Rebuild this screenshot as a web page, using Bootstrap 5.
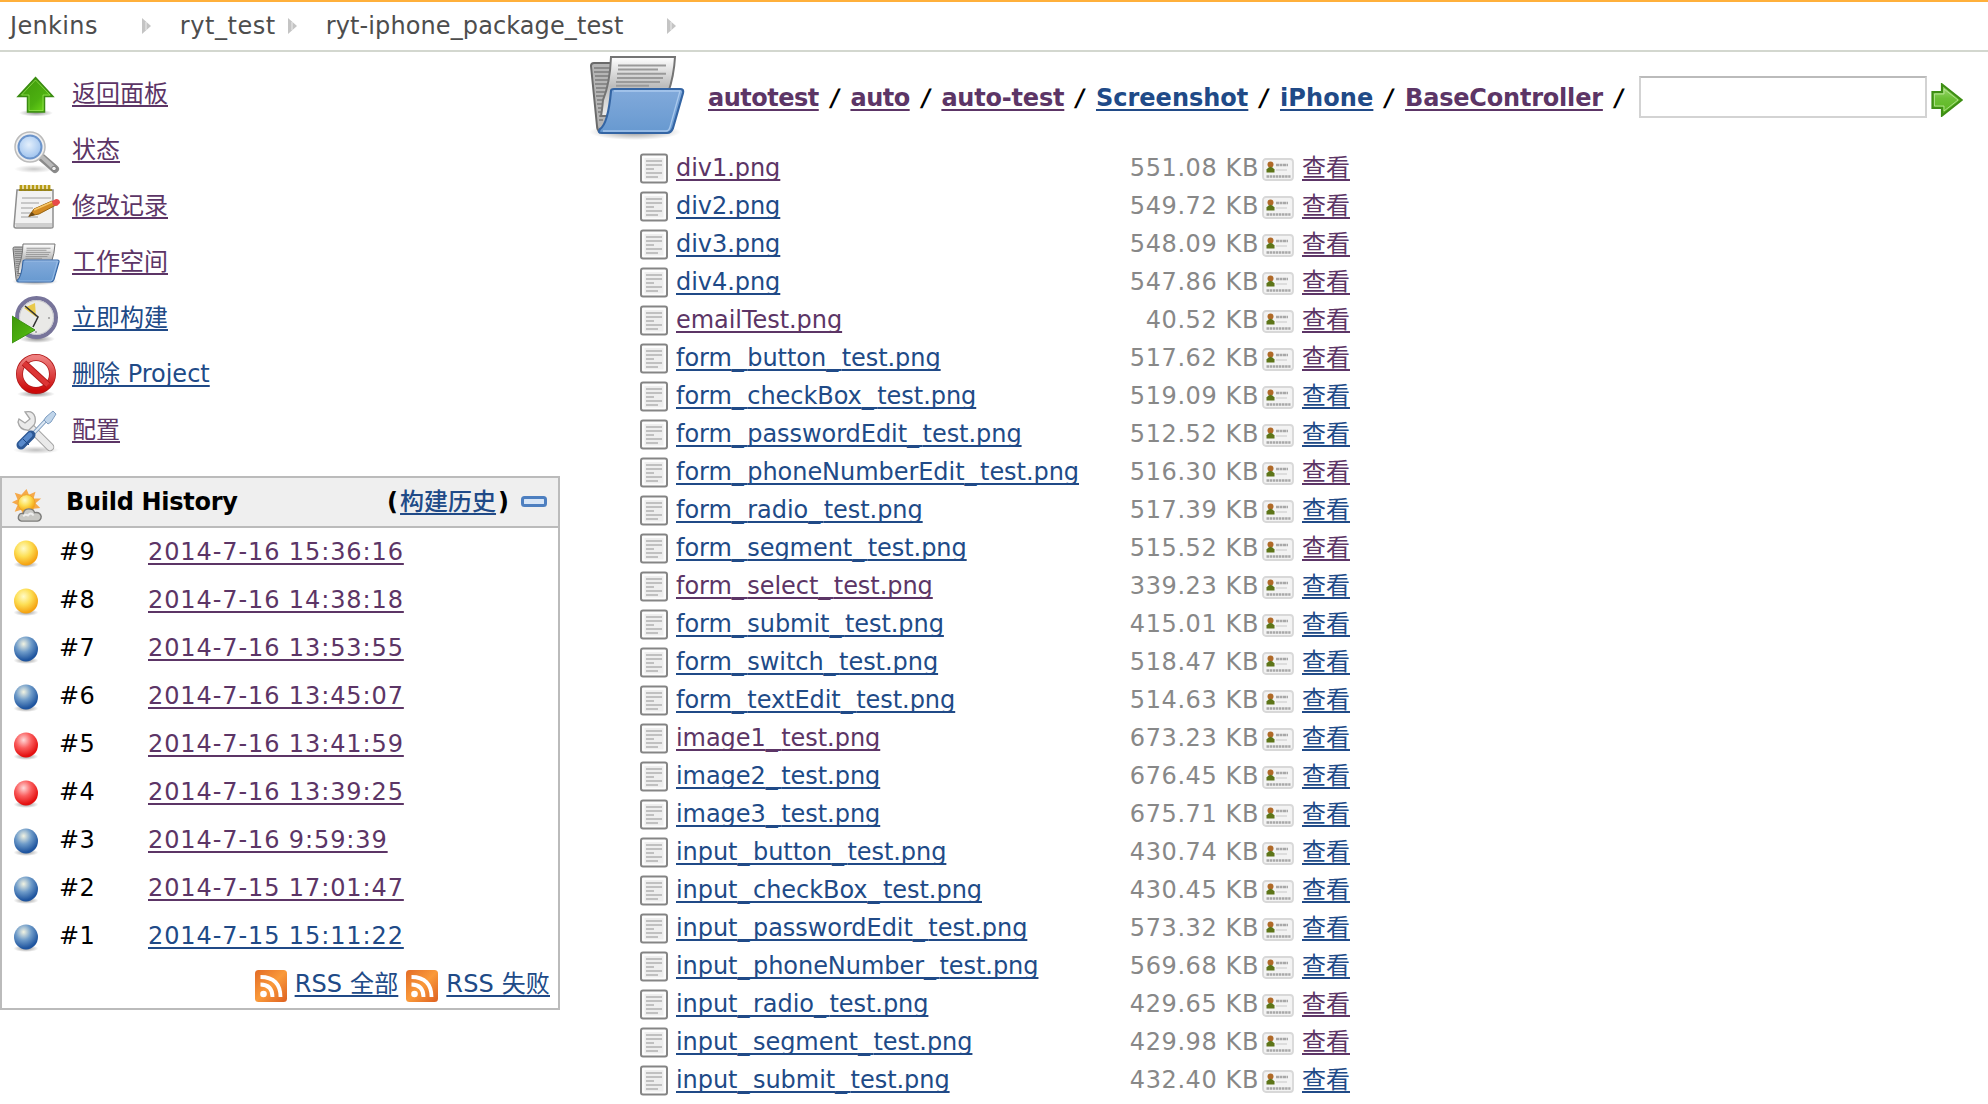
<!DOCTYPE html>
<html lang="zh-CN">
<head>
<meta charset="utf-8">
<meta name="viewport" content="width=device-width, initial-scale=1">
<title>ryt-iphone_package_test [Jenkins]</title>
<link href="https://cdn.jsdelivr.net/npm/bootstrap@5.3.0/dist/css/bootstrap.min.css" rel="stylesheet">
<style>
body{font-family:"DejaVu Sans","Noto Sans CJK SC",sans-serif;font-size:24px;line-height:38px;color:#000;background:#fff;overflow:hidden;height:1104px}
a{color:#204a87;text-decoration:underline;text-decoration-thickness:2px;text-underline-offset:3px;text-decoration-skip-ink:none;white-space:nowrap}
a.seen{color:#5c3566}
svg{display:block;flex:none}
.crumbs{height:52px;border-top:2px solid #ffb03b;border-bottom:2px solid #d3d7cf;padding-left:10px}
.crumbs a{color:#4d4d4d;text-decoration:none;margin-right:44px;letter-spacing:.1px}
.crumbs svg{margin-right:28px}
.crumbs .home{letter-spacing:.35px}
.crumbs .near{margin-right:12px;letter-spacing:.55px}
.side{width:561px;padding-top:15px}
.task{height:56px;padding-left:12px}
.task svg{margin:2px 12px 0 0}
.task a{margin-top:-2px}
.history{width:560px;height:534px;margin-top:17px;border:2px solid #bbb}
.history-head{height:50px;background:#efefef;border-bottom:2px solid #bbb;font-weight:bold;padding:0 11px 0 9px}
.history-head .title{margin-left:23px;letter-spacing:-.3px}
.history-head a{font-weight:500;margin:0 2px 0 2px}
.history-head .fold{margin-left:12px}
.build{height:48px;padding-left:11px}
.build svg{margin-top:3px}
.build .num{width:89px;margin-left:20px;letter-spacing:.5px}
.build a{letter-spacing:.9px}
.rss{height:48px;padding-right:8px}
.rss svg{margin:3px 8px 0}
.rss a{letter-spacing:.15px}
.main{padding-left:28px}
.path{height:97px;font-weight:bold}
.path .dir{margin:-3px 23px 0 0}
.path a,.path b{margin-top:27px}
.path b{width:31.7px;text-align:center;transform:skewX(-9deg)}
.tight{letter-spacing:-.5px}
.snug{letter-spacing:-.2px}
.airy{letter-spacing:.1px}
.goto{width:288px;height:42px;border:2px solid #d3d3d3;border-top-color:#bbb;border-radius:0;padding:0;margin:24px 4px 0}
.go{margin-top:31px}
.file{height:38px;padding-left:51px}
.file .doc{margin-top:2px}
.file .fname{margin-left:8px;width:348px;letter-spacing:-.05px}
.file .fname i{font-style:normal;letter-spacing:3.5px}
.file .fsize{width:235px;text-align:right;color:#888;letter-spacing:.6px;margin-right:3px}
.file .print{margin-top:3px}
.file .view{margin-left:8px}
</style>
</head>
<body>
<svg width="0" height="0" class="position-absolute">
<defs>
<linearGradient id="gGreen" x1="0" y1="0" x2="1" y2="1"><stop offset="0" stop-color="#3f960b"/><stop offset=".6" stop-color="#4cb010"/><stop offset="1" stop-color="#7be81c"/></linearGradient>
<linearGradient id="gGo" x1="0" y1="0" x2="0" y2="1"><stop offset="0" stop-color="#a6dc7c"/><stop offset=".45" stop-color="#6cc036"/><stop offset="1" stop-color="#58b41c"/></linearGradient>
<linearGradient id="gBlue" x1="0" y1="0" x2="0" y2="1"><stop offset="0" stop-color="#82aadb"/><stop offset="1" stop-color="#6799d0"/></linearGradient>
<linearGradient id="gPaper" x1="0" y1="0" x2="0" y2="1"><stop offset="0" stop-color="#fff"/><stop offset=".5" stop-color="#bcbcbc"/><stop offset="1" stop-color="#eee"/></linearGradient>
<linearGradient id="gRed" x1="0" y1="0" x2="0" y2="1"><stop offset="0" stop-color="#ee7f7f"/><stop offset="1" stop-color="#cc0a0a"/></linearGradient>
<linearGradient id="gRss" x1="0" y1="0" x2="1" y2="1"><stop offset="0" stop-color="#e26b26"/><stop offset=".5" stop-color="#fa9a3a"/><stop offset="1" stop-color="#dd6020"/></linearGradient>
<radialGradient id="gShade"><stop offset="0" stop-color="#000" stop-opacity=".42"/><stop offset="1" stop-color="#000" stop-opacity="0"/></radialGradient>
<radialGradient id="bYellow" cx=".4" cy=".32" r=".65"><stop offset="0" stop-color="#fffbc8"/><stop offset=".5" stop-color="#fddf55"/><stop offset="1" stop-color="#f5a312"/></radialGradient>
<radialGradient id="bBlue" cx=".4" cy=".3" r=".65"><stop offset="0" stop-color="#f2f3e2"/><stop offset=".5" stop-color="#6e9bc9"/><stop offset="1" stop-color="#1f559f"/></radialGradient>
<radialGradient id="bRed" cx=".4" cy=".3" r=".65"><stop offset="0" stop-color="#ffd9d9"/><stop offset=".5" stop-color="#fa5d5d"/><stop offset="1" stop-color="#e41010"/></radialGradient>
<radialGradient id="gLens" cx=".45" cy=".4" r=".6"><stop offset="0" stop-color="#e3effc"/><stop offset="1" stop-color="#9fc3ee"/></radialGradient>
<symbol id="i-folder" viewBox="0 0 96 96">
<ellipse cx="46" cy="83" rx="46" ry="8" fill="url(#gShade)"/>
<path d="M2 17q0-3 3-3h20v45L16 82l-5 1q-3-2-3-6z" fill="#b5b5b5" stroke="#6a6a6a" stroke-width="2"/>
<path d="M5 19h17M5 23h17M6 27h15M6 31h15M6 35h14M7 39h13M7 43h12M7 47h12M8 51h10M8 55h9M9 59h7M9 63h6M10 67h4M10 71h4" stroke="#7c7c7c" stroke-width="1.500"/>
<path d="M22 8h64q-1 19-7 36H24Q20 64 18 67h-6q1-5 2-16Q21 34 22 8z" fill="url(#gPaper)" stroke="#747474" stroke-width="2"/>
<path d="M29 16.500h48M29 20.500h40M28 24.700h49M28 28.900h46M27 33h44M27 36.700h33" stroke="#9a9a9a" stroke-width="2"/>
<path d="M22 42q0-2 3-2h66q4 0 3 4l-10 35q-2 5-6 5H13q-5 0-2-4 8-5 11-38z" fill="url(#gBlue)" stroke="#3465a4" stroke-width="2.200"/>
<path d="M25 42h66L81 78q-1 4-4 4H14" fill="none" stroke="#b5d2f3" stroke-width="1.300" opacity=".8"/>
</symbol>
<symbol id="i-up" viewBox="0 0 48 48">
<ellipse cx="24" cy="41" rx="17" ry="3.500" fill="url(#gShade)"/>
<path d="M23.500 5.500 41 24.500h-8.500V40h-17V24.500H6z" fill="url(#gGreen)" stroke="#3a8a12" stroke-width="1.500"/>
<path d="M23.500 8 38 23h-7v15.500H17V23H9.500z" fill="none" stroke="#9be25c" opacity=".7"/>
</symbol>
<symbol id="i-search" viewBox="0 0 48 48">
<ellipse cx="22" cy="41" rx="20" ry="4" fill="url(#gShade)" opacity=".5"/>
<path d="m28 28 15 13" stroke="#8b8b8b" stroke-width="8" stroke-linecap="round"/><path d="m29 28 13 12" stroke="#b9b9b9" stroke-width="4"/><circle cx="42" cy="40.500" r="2.300" fill="#eee" stroke="#777"/>
<circle cx="18" cy="19" r="15" fill="#eee" stroke="#bbb" stroke-width="1.500"/>
<circle cx="18" cy="19" r="11.500" fill="url(#gLens)" stroke="#6b94cb" stroke-width="2"/>
</symbol>
<symbol id="i-note" viewBox="0 0 48 48">
<path d="M5 6h36v37q0 1-2 1H4q-2 0-2-2z" fill="#f2f2f2" stroke="#8e8e8e" stroke-width="1.500"/>
<path d="M3 39h37v4H4z" fill="#cfcfcf"/>
<path d="M10 14h29M9 19h18M9 24h12M9 29h12M9 33h17" stroke="#bbb" stroke-width="1.600"/>
<path d="M9 1v6M13 1v6M17 1v6M21 1v6M25 1v6M29 1v6M33 1v6M37 1v6" stroke="#b79b12" stroke-width="2.800"/><path d="M7 6h33" stroke="#8f7b13" stroke-width="1.500"/>
<path d="m17 32 5-7 18-8 4 4-17 9z" fill="#d28b24" stroke="#98630f"/><path d="m22 26 18-8" stroke="#f7c668" stroke-width="1.500"/>
<path d="m16 33 4-5 3 3z" fill="#6d4a16"/><path d="m40 17 4-2q4 0 4 4l-3 3-4-1z" fill="#e84a4a"/>
</symbol>
<symbol id="i-clock" viewBox="0 0 48 48">
<ellipse cx="25" cy="43" rx="18" ry="4" fill="url(#gShade)"/>
<circle cx="24.500" cy="21.500" r="19.500" fill="#e9e9e7" stroke="#77749a" stroke-width="4"/>
<circle cx="24.500" cy="21.500" r="17" fill="none" stroke="#c5c5cc"/>
<path d="m12 12 11-5 1 14z" fill="#e9c94a"/><path d="m13 10 13 11-5 10M26 21l-2 4" stroke="#333" stroke-width="1.600" fill="none"/>
<circle cx="37" cy="22" r="1" fill="#999"/><circle cx="24" cy="36" r="1" fill="#999"/>
<path d="m0 20 23 14L0 47z" fill="url(#gGreen)" stroke="#3d9212"/>
</symbol>
<symbol id="i-ban" viewBox="0 0 48 48">
<ellipse cx="24" cy="42" rx="19" ry="3.500" fill="url(#gShade)"/>
<circle cx="24" cy="22" r="16.500" fill="none" stroke="#b01717" stroke-width="7"/><circle cx="24" cy="22" r="16.500" fill="none" stroke="url(#gRed)" stroke-width="5.500"/>
<path d="m12 11 24 22" stroke="#b01717" stroke-width="6.500"/><path d="m12 11 24 22" stroke="#dc3535" stroke-width="5"/>
</symbol>
<symbol id="i-tools" viewBox="0 0 48 48">
<ellipse cx="24" cy="42" rx="23" ry="4" fill="url(#gShade)" opacity=".6"/>
<path d="m17 18 21 21" stroke="#a5a5a5" stroke-width="8.500" stroke-linecap="round"/><path d="m17 18 21 21" stroke="#eaeaea" stroke-width="6.500" stroke-linecap="round"/>
<path d="M13 4q8-2 10 5 1 5-1 8l-5 5q-9 1-11-8l1-3 6 4 5-4z" fill="#eaeaea" stroke="#a5a5a5" stroke-width="1.300"/>
<path d="m20 27 17-18" stroke="#7998bc" stroke-width="4"/><path d="m20 27 17-18" stroke="#dce8f4" stroke-width="2"/>
<path d="m34 9 7-6 3 3-5 8-3 2-4-4z" fill="#c0d5ea" stroke="#7e9dc0"/>
<path d="m9 37 10-10" stroke="#2d5894" stroke-width="9" stroke-linecap="round"/><path d="m9 36 9-9" stroke="#598acb" stroke-width="5" stroke-linecap="round"/><path d="m11 31 6 6" stroke="#204a87"/>
</symbol>
<symbol id="i-sun" viewBox="0 0 32 36">
<path d="m15.500 0 2.500 6 7-3-2 7 8 0-6 5 5 5-7 1-1 6-6-3-4 5-2-7-7 2 3-7-6-3 6-3-3-7 7 2z" fill="#f5a94a"/>
<circle cx="15.500" cy="15" r="9" fill="url(#bYellow)" stroke="#eda52a"/>
<path d="M10 34q-4-1-3-5 1-4 5-3 1-5 6-5 5 0 6 4 6-1 7 4 0 4-4 5z" fill="#c8c8c4" stroke="#7c7c7a" stroke-width="1.500"/><path d="M12 29q2-3 5-1 3-4 6 0" stroke="#eee" stroke-width="2" fill="none"/>
</symbol>
<symbol id="i-rss" viewBox="0 0 32 32">
<rect width="32" height="32" rx="3.500" fill="url(#gRss)"/>
<circle cx="8.500" cy="24" r="3.300" fill="#fff"/><path d="M5.500 14.500q12 0 12 12.500M5.500 7q20 0 20 20" fill="none" stroke="#fff" stroke-width="3.800"/>
</symbol>
<symbol id="i-doc" viewBox="0 0 28 32">
<rect x="1" y="1.500" width="26" height="28" rx="2" fill="#fcfcfc" stroke="#858585" stroke-width="2"/>
<rect x="4.500" y="5" width="19" height="21.500" fill="#eee"/>
<path d="M6 8h16M6 12h16M6 16h8M6 20h16M6 24h12" stroke="#c0c0c0" stroke-width="1.800"/>
</symbol>
<symbol id="i-print" viewBox="0 0 32 26">
<rect x="1" y="2" width="30" height="21" rx="3" fill="#f3f3f3" stroke="#d8d8d8" stroke-width="1.800"/>
<circle cx="8.500" cy="7.500" r="3" fill="#b06a28"/><path d="M4.500 15.500v-3q4-5.500 8 0v3z" fill="#5d7518"/>
<path d="M14 8h12" stroke="#a8a8a8" stroke-width="2.400" stroke-dasharray="3 .5"/><path d="M14 13h11" stroke="#ddd" stroke-width="2"/><path d="M4.500 19.500h24" stroke="#a8a8a8" stroke-width="2.600" stroke-dasharray="2.500 .6"/>
</symbol>
<symbol id="i-tri" viewBox="0 0 10 16"><path d="M0 0v16l9-8z" fill="#c4c4c4"/><path d="M4 4v8" stroke="#eee"/></symbol>
</defs>
</svg>

<nav class="crumbs d-flex align-items-center">
<a href="#" class="home">Jenkins</a><svg width="10" height="16"><use href="#i-tri"/></svg>
<a href="#" class="near">ryt_test</a><svg width="10" height="16"><use href="#i-tri"/></svg>
<a href="#">ryt-iphone_package_test</a><svg width="10" height="16"><use href="#i-tri"/></svg>
</nav>

<div class="d-flex">
<aside class="side flex-shrink-0">
<div class="task d-flex align-items-center"><svg width="48" height="48"><use href="#i-up"/></svg><a class="seen" href="#">返回面板</a></div>
<div class="task d-flex align-items-center"><svg width="48" height="48"><use href="#i-search"/></svg><a class="seen" href="#">状态</a></div>
<div class="task d-flex align-items-center"><svg width="48" height="48"><use href="#i-note"/></svg><a class="seen" href="#">修改记录</a></div>
<div class="task d-flex align-items-center"><svg width="48" height="48"><use href="#i-folder"/></svg><a class="seen" href="#">工作空间</a></div>
<div class="task d-flex align-items-center"><svg width="48" height="48"><use href="#i-clock"/></svg><a href="#">立即构建</a></div>
<div class="task d-flex align-items-center"><svg width="48" height="48"><use href="#i-ban"/></svg><a href="#">删除 Project</a></div>
<div class="task d-flex align-items-center"><svg width="48" height="48"><use href="#i-tools"/></svg><a class="seen" href="#">配置</a></div>

<section class="history">
<div class="history-head d-flex align-items-center"><svg width="32" height="34" class="mt-2"><use href="#i-sun"/></svg><span class="title">Build History</span><span class="ms-auto">(<a href="#">构建历史</a>)</span>
<svg class="fold" width="26" height="12" viewBox="0 0 26 12"><rect x="1.500" y="1.500" width="23" height="8" rx="2" fill="#d7e5f6" stroke="#4d7fc0" stroke-width="3"/></svg></div>
<div id="builds"></div>
<div class="rss d-flex align-items-center justify-content-end"><svg width="32" height="32"><use href="#i-rss"/></svg><a href="#">RSS 全部</a><svg width="32" height="32"><use href="#i-rss"/></svg><a href="#">RSS 失败</a></div>
</section>
</aside>

<main class="main flex-grow-1">
<div class="path d-flex align-items-start"><svg width="96" height="96" class="dir"><use href="#i-folder"/></svg>
<a class="seen tight" href="#">autotest</a><b>/</b><a class="seen tight" href="#">auto</a><b>/</b><a class="seen snug" href="#">auto-test</a><b>/</b><a href="#">Screenshot</a><b>/</b><a class="airy" href="#">iPhone</a><b>/</b><a class="seen snug" href="#">BaseController</a><b>/</b><input class="goto form-control" type="text" aria-label="path"><svg class="go" width="32" height="34" viewBox="0 0 32 34"><path d="M1.500 9H11V1.500L30.500 17 11 32.500V25H1.500z" fill="url(#gGo)" stroke="#3e8f14" stroke-width="2.200"/><path d="M3.500 11H13V6l14 11-14 11v-5H3.500z" fill="none" stroke="#c6ecaa" opacity=".7"/></svg></div>
<div id="files"></div>
</main>
</div>

<script src="https://cdn.jsdelivr.net/npm/bootstrap@5.3.0/dist/js/bootstrap.bundle.min.js"></script>
<script>
const builds=[[9,'Yellow','2014-7-16 15:36:16'],[8,'Yellow','2014-7-16 14:38:18'],[7,'Blue','2014-7-16 13:53:55'],[6,'Blue','2014-7-16 13:45:07'],[5,'Red','2014-7-16 13:41:59'],[4,'Red','2014-7-16 13:39:25'],[3,'Blue','2014-7-16 9:59:39'],[2,'Blue','2014-7-15 17:01:47'],[1,'Blue','2014-7-15 15:11:22']];
document.getElementById('builds').innerHTML=builds.map(([n,c,t])=>`<div class="build d-flex align-items-center"><svg width="26" height="30" viewBox="0 0 26 30"><ellipse cx="13" cy="25.500" rx="12.500" ry="3.500" fill="url(#gShade)"/><ellipse cx="13" cy="14" rx="12" ry="12.500" fill="url(#b${c})"/></svg><span class="num">#${n}</span><a href="#" class="${n>1?'seen':''}">${t}</a></div>`).join('');
/* name, size, file visited, view link visited */
const files=[['div1.png','551.08',1,1],['div2.png','549.72',0,1],['div3.png','548.09',0,1],['div4.png','547.86',0,1],['emailTest.png','40.52',1,1],['form_button_test.png','517.62',0,1],['form_checkBox_test.png','519.09',0,0],['form_passwordEdit_test.png','512.52',0,0],['form_phoneNumberEdit_test.png','516.30',0,1],['form_radio_test.png','517.39',0,0],['form_segment_test.png','515.52',0,1],['form_select_test.png','339.23',1,0],['form_submit_test.png','415.01',0,0],['form_switch_test.png','518.47',0,0],['form_textEdit_test.png','514.63',0,0],['image1_test.png','673.23',1,0],['image2_test.png','676.45',0,0],['image3_test.png','675.71',0,0],['input_button_test.png','430.74',0,0],['input_checkBox_test.png','430.45',0,0],['input_passwordEdit_test.png','573.32',0,0],['input_phoneNumber_test.png','569.68',0,0],['input_radio_test.png','429.65',0,1],['input_segment_test.png','429.98',0,1],['input_submit_test.png','432.40',0,0]];
document.getElementById('files').innerHTML=files.map(([n,s,a,b])=>`<div class="file d-flex align-items-center"><svg class="doc" width="28" height="32"><use href="#i-doc"/></svg><span class="fname"><a href="#" class="${a?'seen':''}">${n.replace(/_/g,'<i>_</i>')}</a></span><span class="fsize">${s} KB</span><svg class="print" width="32" height="26"><use href="#i-print"/></svg><a href="#" class="view ${b?'seen':''}">查看</a></div>`).join('');
</script>
</body>
</html>
